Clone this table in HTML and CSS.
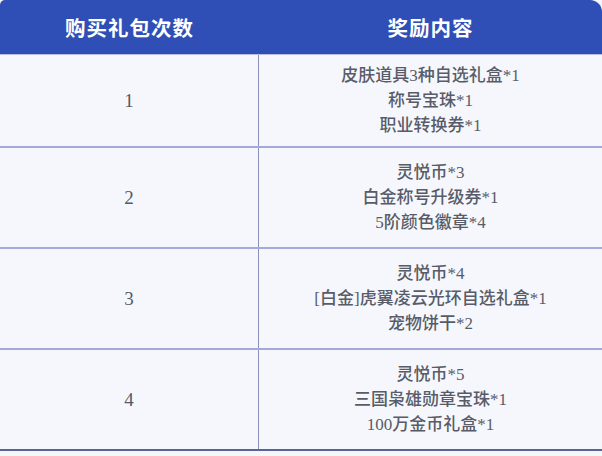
FILE: index.html
```html
<!DOCTYPE html>
<html lang="zh">
<head>
<meta charset="utf-8">
<link rel="stylesheet" href="styles.css">
</head>
<body>
<div class="table">
  <div class="head">
    <div class="hcell">购买礼包次数</div>
    <div class="hcell">奖励内容</div>
  </div>
  <div class="row first">
    <div class="num">1</div>
    <div class="items"><div>皮肤道具3种自选礼盒*1</div><div>称号宝珠*1</div><div>职业转换券*1</div></div>
  </div>
  <div class="row">
    <div class="num">2</div>
    <div class="items"><div>灵悦币*3</div><div>白金称号升级券*1</div><div>5阶颜色徽章*4</div></div>
  </div>
  <div class="row">
    <div class="num">3</div>
    <div class="items"><div>灵悦币*4</div><div>[白金]虎翼凌云光环自选礼盒*1</div><div>宠物饼干*2</div></div>
  </div>
  <div class="row last">
    <div class="num">4</div>
    <div class="items"><div>灵悦币*5</div><div>三国枭雄勋章宝珠*1</div><div>100万金币礼盒*1</div></div>
  </div>
</div>
</body>
</html>
```
FILE: styles.css
```css
html, body { margin: 0; padding: 0; background: #f6f7fc; }
body { width: 602px; height: 456px; overflow: hidden; font-family: "Liberation Serif", "Noto Sans CJK SC", serif; }
.table { display: flex; flex-direction: column; }
.head {
  display: grid; grid-template-columns: 259px 1fr; height: 54px;
  background: #2f4fb6; border-top-left-radius: 5px; border-top-right-radius: 12px;
}
.hcell {
  display: flex; align-items: center; justify-content: center;
  color: #fff; font-family: "Noto Sans CJK SC", sans-serif; font-weight: 700; font-size: 20.5px;
  letter-spacing: 1px;
}
.row {
  display: grid; grid-template-columns: 259px 1fr; height: 99px;
  border-top: 2px solid #a4a9d8;
}
.row.first { height: 91px; border-top: 1px solid #b9bde0; }
.row.last { border-bottom: 2px solid #5a6492; }
.num {
  display: flex; align-items: center; justify-content: center;
  border-right: 1px solid #8a90b8; color: #555a66; font-size: 19px;
}
.items {
  display: flex; flex-direction: column; align-items: center; justify-content: center;
  color: #585c68; font-size: 17px; line-height: 25px; font-weight: 500;
  font-family: "Liberation Serif", "Noto Sans CJK SC", serif;
}
```
